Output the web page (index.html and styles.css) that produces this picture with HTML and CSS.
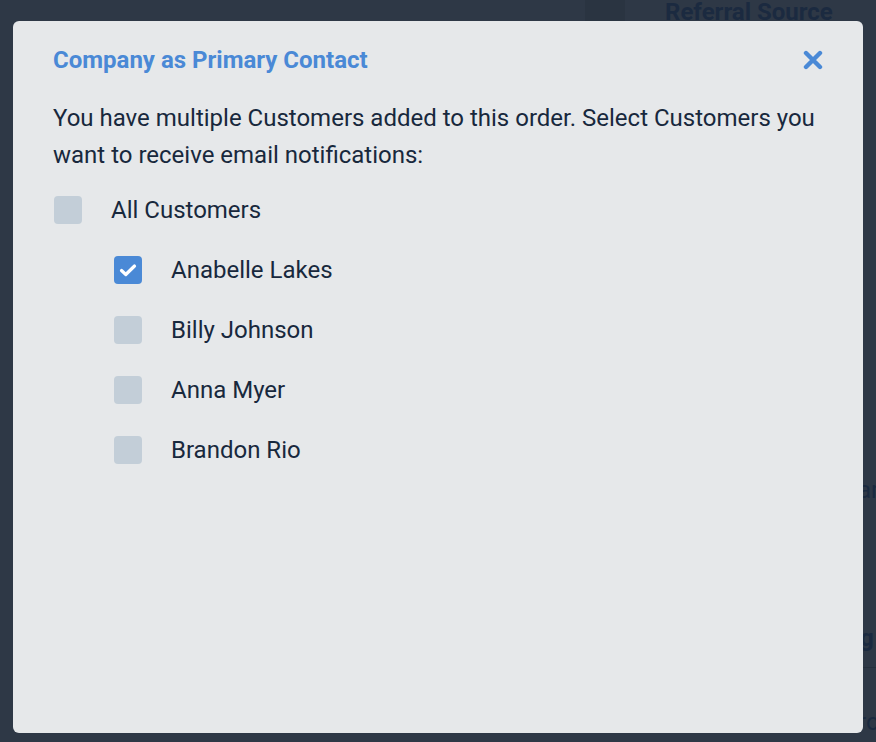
FILE: index.html
```html
<!DOCTYPE html>
<html lang="en">
<head>
<meta charset="utf-8">
<title>Company as Primary Contact</title>
<link rel="stylesheet" href="styles.css">
</head>
<body>
<div class="page">
  <div class="bg-block"></div>
  <div class="bg-heading">Referral Source</div>
  <div class="bg-text bg-text-1">ar</div>
  <div class="bg-text bg-text-2">g</div>
  <div class="bg-line"></div>
  <div class="bg-text bg-text-3">ro</div>
</div>
<div class="modal" role="dialog" aria-labelledby="modal-title">
  <div class="modal-header">
    <h2 class="modal-title" id="modal-title">Company as Primary Contact</h2>
    <button class="close-btn" aria-label="Close">
      <svg width="20" height="20" viewBox="0 0 20 20"><path d="M3 3 L17 17 M17 3 L3 17" stroke="#4a89d6" stroke-width="4.4" stroke-linecap="round"/></svg>
    </button>
  </div>
  <p class="modal-text">You have multiple Customers added to this order. Select Customers you want to receive email notifications:</p>
  <ul class="check-list">
    <li class="check-row">
      <span class="box"></span>
      <span class="label">All Customers</span>
    </li>
    <li class="check-row child">
      <span class="box checked">
        <svg width="28" height="28" viewBox="0 0 28 28"><path d="M7.5 14.5 L11.8 18.5 L20.5 10" fill="none" stroke="#fff" stroke-width="3.2" stroke-linecap="round" stroke-linejoin="round"/></svg>
      </span>
      <span class="label">Anabelle Lakes</span>
    </li>
    <li class="check-row child">
      <span class="box"></span>
      <span class="label">Billy Johnson</span>
    </li>
    <li class="check-row child">
      <span class="box"></span>
      <span class="label">Anna Myer</span>
    </li>
    <li class="check-row child">
      <span class="box"></span>
      <span class="label">Brandon Rio</span>
    </li>
  </ul>
</div>
</body>
</html>
```

FILE: styles.css
```css
html, body {
  margin: 0;
  padding: 0;
  width: 876px;
  height: 742px;
  overflow: hidden;
  font-family: Roboto, "Liberation Sans", sans-serif;
}

/* dimmed page seen behind the modal */
.page {
  position: relative;
  width: 876px;
  height: 742px;
  background: #2e3846;
}

.bg-block {
  position: absolute;
  left: 585px;
  top: 0;
  width: 40px;
  height: 21px;
  background: #2a3441;
}

.bg-heading {
  position: absolute;
  left: 665px;
  top: -2px;
  font-size: 24px;
  font-weight: 700;
  color: #1b2a40;
  white-space: nowrap;
}

.bg-text {
  position: absolute;
  font-size: 24px;
  color: #1b2a40;
  width: 18px;
  overflow: hidden;
  white-space: nowrap;
}

.bg-text-1 { left: 858px; top: 476px; }
.bg-text-2 { left: 860px; top: 624px; font-weight: 700; width: 16px; }
.bg-text-3 { left: 858px; top: 708px; }

.bg-line {
  position: absolute;
  left: 863px;
  top: 667px;
  width: 13px;
  height: 1px;
  background: #26303d;
}

.modal {
  position: absolute;
  left: 13px;
  top: 21px;
  width: 850px;
  height: 712px;
  box-sizing: border-box;
  padding: 25px 40px 0 40px;
  background: #e6e8ea;
  border-radius: 6px;
  color: #18283d;
}

.modal-header {
  display: flex;
  align-items: center;
  justify-content: space-between;
  height: 28px;
}

.modal-title {
  margin: 0;
  font-size: 24px;
  font-weight: 700;
  color: #4a89d6;
  line-height: 28px;
}

.close-btn {
  border: 0;
  background: none;
  padding: 0;
  width: 20px;
  height: 20px;
  display: flex;
  cursor: pointer;
}

.modal-text {
  margin: 26px 0 0 0;
  font-size: 24px;
  line-height: 37px;
}

.check-list {
  list-style: none;
  margin: 6px 0 0 0;
  padding: 0;
}

.check-row {
  display: flex;
  align-items: center;
  height: 60px;
  font-size: 24px;
  padding-left: 1px;
}

.check-row.child {
  padding-left: 61px;
}

.box {
  width: 28px;
  height: 28px;
  border-radius: 4px;
  background: #c3ced8;
  flex: none;
  display: flex;
}

.box.checked {
  background: #4a89d6;
}

.label {
  margin-left: 29px;
}
```
